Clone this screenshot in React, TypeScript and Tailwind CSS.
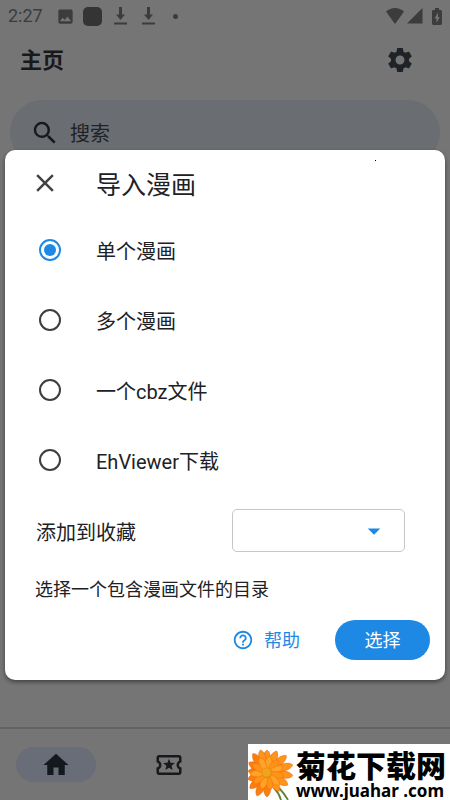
import { useState } from "react";
import {
  MdArrowDropDown,
  MdClose,
  MdHelpOutline,
  MdHome,
  MdImage,
  MdOutlineLocalActivity,
  MdSearch,
  MdSettings,
} from "react-icons/md";

const sources = [
  { id: "single", label: "单个漫画" },
  { id: "multiple", label: "多个漫画" },
  { id: "cbz", label: "一个cbz文件" },
  { id: "ehviewer", label: "EhViewer下载" },
];

export default function App() {
  return (
    <div className="relative flex min-h-screen flex-col bg-[#757575] font-['Roboto','Noto_Sans_CJK_SC',sans-serif] text-[#17191c]">
      <StatusBar />
      <header className="flex h-14 items-center justify-between pr-[35px] pl-5">
        <h1 className="pt-px text-[22px] font-bold">主页</h1>
        <button type="button" aria-label="设置" className="text-[#1f2226]">
          <MdSettings className="size-[30px]" />
        </button>
      </header>
      <main className="flex-1 px-[10px] pt-3">
        <label className="flex h-[65px] items-center rounded-full bg-[#6a6d71] px-5">
          <MdSearch className="size-[30px] shrink-0" />
          <input
            type="search"
            placeholder="搜索"
            className="ml-[10px] w-full min-w-0 bg-transparent pt-[3px] text-xl outline-none placeholder:text-[#202225]"
          />
        </label>
      </main>
      <BottomNav />
      <ImportDialog />
      <Watermark />
    </div>
  );
}

function StatusBar() {
  return (
    <div className="flex h-8 items-center justify-between px-2 text-[#3c3c3c]">
      <div className="flex items-center">
        <span className="w-12 text-lg">2:27</span>
        <MdImage className="size-[19px]" />
        <span className="ml-2 size-[19px] rounded-[5px] bg-[#343434]" />
        <span className="ml-3 flex gap-[15px]">
          <DownloadIcon />
          <DownloadIcon />
        </span>
        <span className="ml-[18px] size-[5px] rounded-full bg-current" />
      </div>
      <div className="flex items-center">
        <svg viewBox="0 0 18 16" className="h-4 w-[18px]" fill="currentColor" aria-hidden>
          <path d="M0 3.6C5-1.2 13-1.2 18 3.6L9.6 15.3q-.6.8-1.2 0z" />
        </svg>
        <svg viewBox="0 0 16 16" className="ml-[3px] size-4" fill="currentColor" aria-hidden>
          <path d="M15.5 0v15.5H0z" />
        </svg>
        <svg viewBox="0 0 10 17" className="ml-[9px] h-[17px] w-[10px]" fill="currentColor" aria-hidden>
          <path
            fillRule="evenodd"
            d="M3 0h4v2h1.6Q10 2 10 3.4V15.6Q10 17 8.6 17H1.4Q0 17 0 15.6V3.4Q0 2 1.4 2H3zM6 4.5 2.5 10.5H4.5V15L7.7 9H6z"
          />
        </svg>
      </div>
    </div>
  );
}

function DownloadIcon() {
  return (
    <svg viewBox="0 0 13 18" className="h-[18px] w-[13px]" fill="currentColor" aria-hidden>
      <path d="M5 0h3v7.5h3L6.5 13 2 7.5h3zM0 15.4h13V17.4H0z" />
    </svg>
  );
}

function ImportDialog() {
  const [source, setSource] = useState("single");

  return (
    <div className="absolute inset-0 flex items-center justify-center px-[5px] pt-[30px]">
      <form
        role="dialog"
        aria-labelledby="import-title"
        className="relative w-full rounded-[10px] bg-white pb-5 text-[#202124] shadow-[0_2px_4px_rgba(0,0,0,0.45)]"
      >
        <span className="absolute top-[10px] right-[69px] size-px bg-black" />
        <div className="flex h-[65px] items-center pl-[25px]">
          <button type="button" aria-label="关闭" className="text-[#424242]">
            <MdClose className="size-[30px]" />
          </button>
          <h2 id="import-title" className="ml-9 pt-[6px] text-[25px]">
            导入漫画
          </h2>
        </div>
        <fieldset>
          {sources.map((item) => (
            <label key={item.id} className="flex h-[70px] items-center pl-[34px] text-xl">
              <input
                type="radio"
                name="source"
                checked={source === item.id}
                onChange={() => setSource(item.id)}
                className="size-[22px] shrink-0 appearance-none rounded-full border-2 border-[#3c3e42] bg-clip-content p-[3px] checked:border-[#1e88e5] checked:bg-[#1e88e5]"
              />
              <span className="ml-[35px] pt-1">{item.label}</span>
            </label>
          ))}
        </fieldset>
        <div className="mt-[14px] flex items-center justify-between pr-10 pl-[31px]">
          <label htmlFor="favorite" className="pt-1 text-xl">
            添加到收藏
          </label>
          <div className="relative w-[173px]">
            <select
              id="favorite"
              className="block h-[43px] w-full appearance-none rounded-[5px] border border-[#c4c6ca] bg-white px-3"
            >
              <option value="" />
            </select>
            <MdArrowDropDown className="pointer-events-none absolute top-[7px] right-4 size-[30px] text-[#1e88e5]" />
          </div>
        </div>
        <p className="mt-6 pl-[30px] text-lg leading-7">选择一个包含漫画文件的目录</p>
        <div className="mt-4 flex items-center justify-end gap-[35px] pr-[15px] text-lg">
          <button type="button" className="flex items-center gap-[10px] text-[#1e88e5]">
            <MdHelpOutline className="size-[22px]" />
            <span className="pt-px">帮助</span>
          </button>
          <button type="submit" className="h-10 w-[95px] rounded-full bg-[#1e88e5] pt-px text-white">
            选择
          </button>
        </div>
      </form>
    </div>
  );
}

function BottomNav() {
  return (
    <nav className="grid h-[73px] grid-cols-4 items-center border-t-2 border-[#626262]">
      <button
        type="button"
        aria-label="主页"
        className="flex h-[35px] w-20 items-center justify-center justify-self-center rounded-full bg-[#696d78] text-[#14191f]"
      >
        <MdHome className="size-[30px]" />
      </button>
      <button type="button" aria-label="收藏" className="justify-self-center">
        <MdOutlineLocalActivity className="size-[30px]" />
      </button>
    </nav>
  );
}

function Watermark() {
  return (
    <div className="absolute right-0 bottom-0 flex h-14 w-[202px] bg-white text-black">
      <Flower />
      <div className="font-bold whitespace-nowrap">
        <p className="pt-[2px] font-['Noto_Sans_CJK_SC',sans-serif] text-[30px] leading-9 font-black">
          菊花下载网
        </p>
        <p className="font-['Noto_Sans',sans-serif] text-[17px] leading-[18px]">www.juahar .com</p>
      </div>
    </div>
  );
}

const outerPetals = [
  { angle: 0, length: 23 },
  { angle: 180, length: 24 },
  { angle: 48, length: 26 },
  { angle: 228, length: 23 },
  { angle: 96, length: 26 },
  { angle: 276, length: 19 },
  { angle: 24, length: 24 },
  { angle: 204, length: 25 },
  { angle: 72, length: 27 },
  { angle: 252, length: 20 },
  { angle: 120, length: 24 },
  { angle: 300, length: 21 },
  { angle: 146, length: 22 },
  { angle: 324, length: 24 },
  { angle: 344, length: 24 },
];
const innerPetals = [8, 40, 68, 100, 134, 166, 198, 232, 266, 300, 334];

function Flower() {
  return (
    <svg viewBox="0 0 48 56" className="h-14 w-12 shrink-0" aria-hidden>
      <path d="M26 44q5 5 7 12M31 44q5 5 9 12" fill="none" stroke="#64813a" strokeWidth="1.8" />
      {outerPetals.map(({ angle, length }, i) => (
        <path
          key={angle}
          d={`M19 29C13 ${29 - length * 0.6} 15 ${32 - length} 19 ${29 - length}C23 ${32 - length} 24 ${29 - length * 0.6} 19 29`}
          transform={`rotate(${angle} 19 29)`}
          fill={i % 2 ? "#fb7e10" : "#ff941a"}
          stroke="#e66406"
          strokeWidth="0.5"
        />
      ))}
      {innerPetals.map((angle, i) => (
        <path
          key={angle}
          d="M19 29C14 20 16 14 19 12C23 14 24 20 19 29"
          transform={`rotate(${angle} 19 29)`}
          fill={i % 2 ? "#ff9219" : "#ffa328"}
          stroke="#ee730a"
          strokeWidth="0.5"
        />
      ))}
      <circle cx="19" cy="29" r="5.5" fill="#e8900c" />
      <circle cx="18.5" cy="28.5" r="4" fill="#f0a520" />
    </svg>
  );
}
